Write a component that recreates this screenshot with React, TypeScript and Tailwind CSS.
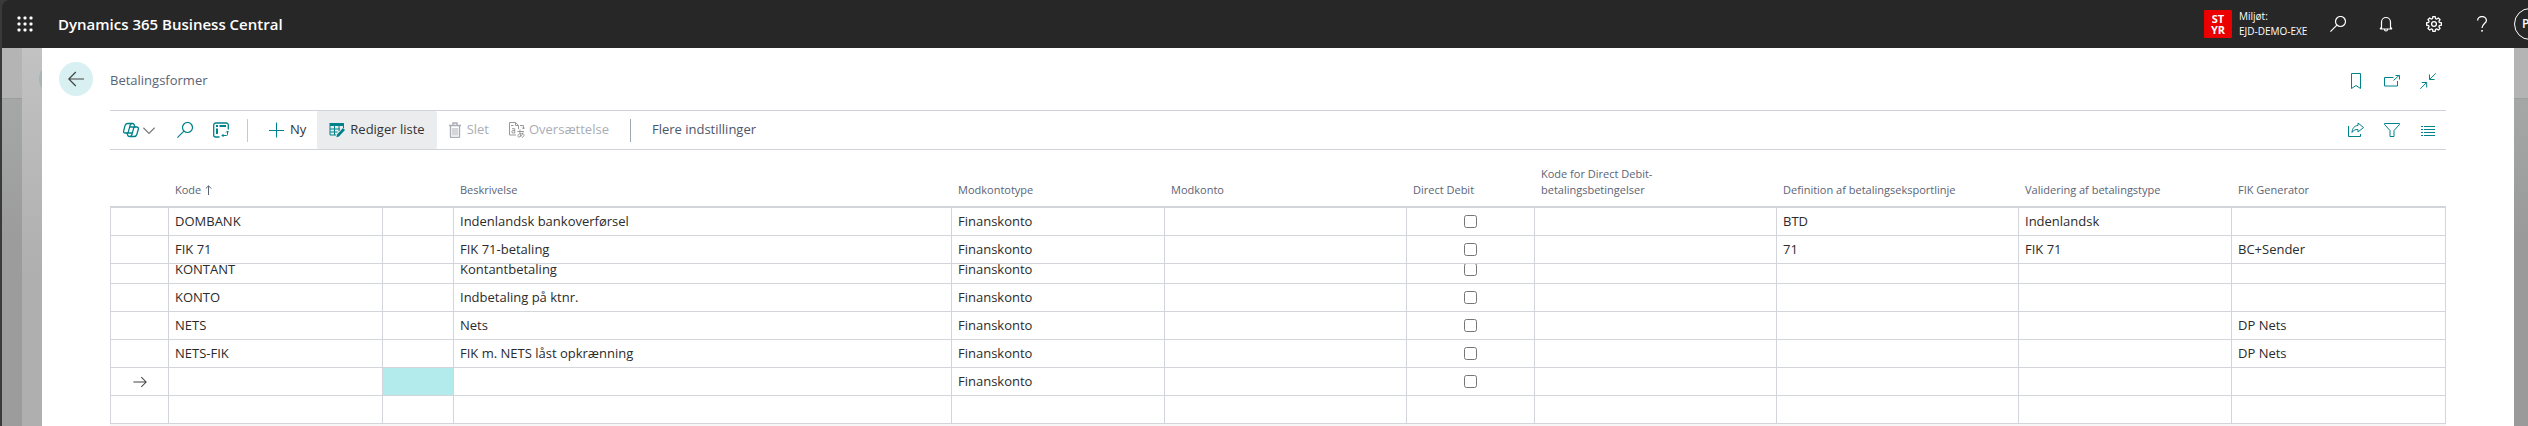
import type { ReactNode } from "react";

type Row = {
  code?: string;
  description?: string;
  accountType?: string;
  exportLine?: string;
  validation?: string;
  generator?: string;
  current?: boolean;
  clipped?: boolean;
};

const rows: Row[] = [
  { code: "DOMBANK", description: "Indenlandsk bankoverførsel", accountType: "Finanskonto", exportLine: "BTD", validation: "Indenlandsk" },
  { code: "FIK 71", description: "FIK 71-betaling", accountType: "Finanskonto", exportLine: "71", validation: "FIK 71", generator: "BC+Sender" },
  { code: "KONTANT", description: "Kontantbetaling", accountType: "Finanskonto", clipped: true },
  { code: "KONTO", description: "Indbetaling på ktnr.", accountType: "Finanskonto" },
  { code: "NETS", description: "Nets", accountType: "Finanskonto", generator: "DP Nets" },
  { code: "NETS-FIK", description: "FIK m. NETS låst opkrænning", accountType: "Finanskonto", generator: "DP Nets" },
  { accountType: "Finanskonto", current: true },
  {},
];

function Icon({ size = 16, className = "", children }: { size?: number; className?: string; children: ReactNode }) {
  return (
    <svg
      width={size}
      height={size}
      viewBox="0 0 16 16"
      fill="none"
      stroke="currentColor"
      strokeWidth="1"
      className={`shrink-0 ${className}`}
      aria-hidden="true"
    >
      {children}
    </svg>
  );
}

function SearchIcon() {
  return (
    <Icon>
      <circle cx="10.5" cy="5.5" r="5" strokeWidth="1.2" />
      <path d="M6.9 9.1 0.4 15.6" strokeWidth="1.2" />
    </Icon>
  );
}

function ArrowUp() {
  return (
    <svg width="7" height="10" viewBox="0 0 7 10" fill="none" stroke="currentColor" aria-hidden="true">
      <path d="M3.5 10V.8M.7 3.6 3.5.8l2.8 2.8" />
    </svg>
  );
}

function TopBar() {
  const button = "flex w-12 items-center justify-center";
  return (
    <header className="flex h-12 overflow-hidden rounded-tl-lg bg-[#272727] text-white">
      <button type="button" aria-label="Appstarter" className="flex w-[46px] items-center justify-center">
        <Icon>
          <g fill="currentColor" stroke="none">
            {[0, 6, 12].map((y) =>
              [0, 6, 12].map((x) => <rect key={`${x}-${y}`} x={x + 0.5} y={y + 0.5} width="3" height="3" rx="1" />),
            )}
          </g>
        </Icon>
      </button>
      <a href="#" className="flex items-center pl-[10px] text-[15px] font-semibold">
        Dynamics 365 Business Central
      </a>
      <div className="-mr-[26px] ml-auto flex">
        <div className="flex items-center gap-[7px] pr-[7px]">
          <span className="flex size-7 flex-col justify-center rounded-[1px] bg-[#eb0000] text-center text-[11px] leading-[11px] font-bold">
            <span>ST</span>
            <span>YR</span>
          </span>
          <span className="flex w-[68px] flex-col text-[10px] leading-[15px] whitespace-nowrap">
            <span>Miljøt:</span>
            <span>EJD-DEMO-EXE</span>
          </span>
        </div>
        <button type="button" aria-label="Søg" className={button}>
          <SearchIcon />
        </button>
        <button type="button" aria-label="Notifikationer" className={button}>
          <Icon>
            <path d="M2 13h12M3.5 13V6a4.5 4.5 0 0 1 9 0v7M2 13l1.5-2M14 13l-1.5-2M6.5 13.5a1.5 1.5 0 0 0 3 0" strokeWidth="1.2" />
          </Icon>
        </button>
        <button type="button" aria-label="Indstillinger" className={button}>
          <Icon>
            <path
              d="M6.9.6h2.2l.4 2 1.2.5 1.7-1.1 1.6 1.6-1.1 1.7.5 1.2 2 .4v2.2l-2 .4-.5 1.2 1.1 1.7-1.6 1.6-1.7-1.1-1.2.5-.4 2H6.9l-.4-2-1.2-.5-1.7 1.1L2 12.4l1.1-1.7-.5-1.2-2-.4V6.9l2-.4.5-1.2L2 3.6 3.6 2l1.7 1.1 1.2-.5z"
              strokeWidth="1.3"
            />
            <circle cx="8" cy="8" r="2.4" strokeWidth="1.3" />
          </Icon>
        </button>
        <button type="button" aria-label="Hjælp" className={button}>
          <Icon>
            <path d="M3.6 4.5A4.4 4 0 0 1 12.4 4.5C12.4 7.3 8 8 8 12" strokeWidth="1.3" />
            <rect x="7.2" y="14" width="1.6" height="1.6" fill="currentColor" stroke="none" />
          </Icon>
        </button>
        <button type="button" aria-label="Konto" className={button}>
          <span className="flex size-8 items-center rounded-full border border-white pl-[7px] text-[12px] font-semibold">P</span>
        </button>
      </div>
    </header>
  );
}

function PageHeader() {
  const button = "flex h-9 w-9 items-center justify-center";
  return (
    <div className="flex h-[62px] items-center pr-[68px] pl-[17px]">
      <button
        type="button"
        aria-label="Tilbage"
        className="flex size-[34px] items-center justify-center rounded-full bg-[#d9f0f2] text-[#444]"
      >
        <Icon>
          <path d="M16 8H.8M7.8 1 .8 8l7 7" strokeWidth="1.2" />
        </Icon>
      </button>
      <h1 className="pt-1 pl-[17px] text-[13px] text-[#5b6475]">Betalingsformer</h1>
      <div className="ml-auto flex pt-1 text-[#00828a]">
        <button type="button" aria-label="Bogmærke" className={button}>
          <Icon>
            <path d="M3.5.5h9v15L8 12.5l-4.5 3z" />
          </Icon>
        </button>
        <button type="button" aria-label="Åbn i nyt vindue" className={button}>
          <Icon>
            <path d="M9.5 4.5h-9v8.5h13V8M9.5 7.5l5.7-5.2M11.500 2.500h4v4" />
          </Icon>
        </button>
        <button type="button" aria-label="Skjul" className={button}>
          <Icon>
            <path d="M15.8.3 9.7 6.4M9.5 1.5v5h5M.3 15.8l6.1-6.1M1.7 9.5h5v5" />
          </Icon>
        </button>
      </div>
    </div>
  );
}

function Toolbar() {
  const icon = "flex h-full w-9 items-center justify-center";
  return (
    <div className="flex h-10 items-center border-y border-[#d0d3d9] text-[13px] text-[#333]">
      <button type="button" aria-label="Copilot" className="flex h-full items-center gap-1 pl-[13px] text-[#00828a]">
        <Icon>
          <g strokeWidth="1.3">
            <path d="M4.5 1.5h5c1 0 1.500.5 1.800 1.500l.5 2h1.900c1.500 0 2 1 1.600 2.300l-1.400 5c-.4 1.400-1.200 2.200-2.500 2.200h-5c-1 0-1.500-.5-1.800-1.500l-.5-2H2.300C.8 11 .3 10 .7 8.700l1.300-5c.4-1.400 1.200-2.200 2.500-2.200z" />
            <path d="M9 1.500c-1 0-1.600.7-1.900 1.700L5.500 9.300C5.200 10.400 4.600 11 3.600 11M7 14.500c1 0 1.600-.7 1.900-1.700l1.600-6.100c.3-1.100.9-1.700 1.900-1.700M7 5h5M4 11h5" />
          </g>
        </Icon>
        <Icon size={12} className="text-[#777]">
          <path d="M.5 5 8 12.5 15.5 5" strokeWidth="1.5" />
        </Icon>
      </button>
      <div className="flex h-full pl-3 text-[#00828a]">
        <button type="button" aria-label="Søg" className={icon}>
          <SearchIcon />
        </button>
        <button type="button" aria-label="Analysér" className={icon}>
          <Icon>
            <path d="M15.3 7.5V3A2 2 0 0 0 13.3 1H2.7A2 2 0 0 0 .7 3v10a2 2 0 0 0 2 2H6.5" strokeWidth="1.3" />
            <path d="M3 3h2v2H3zM6.5 3H13v2H6.5zM3 6.5h2V12H3z" fill="currentColor" stroke="none" />
            <path d="M14.5 9v3.5a1 1 0 0 1-1 1H9M13 10.5 14.5 9l1.5 1.5M10.5 12 9 13.5l1.5 1.5" />
          </Icon>
        </button>
      </div>
      <span className="ml-2 h-[23px] w-px bg-[#c5c9d0]" />
      <button type="button" className="flex h-full items-center gap-[5px] pr-[11px] pl-[21px]">
        <Icon className="text-[#00828a]">
          <path d="M7.5.5v15M0 8.500h15" />
        </Icon>
        Ny
      </button>
      <button type="button" className="flex h-full items-center gap-[5px] rounded-xs bg-[#ebecee] px-3">
        <Icon className="text-[#00828a]">
          <path d="M.5 1h14v3H.5z" fill="currentColor" stroke="none" />
          <path d="M1 1.5h13.5V6M1 4v9h6M5.5 4v9M10 4v5M1 7h10M1 10h7.5" />
          <path d="m14 6 2 2-6 6.5-2.7.8.7-2.8z" fill="currentColor" stroke="none" />
        </Icon>
        Rediger liste
      </button>
      <button type="button" disabled className="flex h-full items-center gap-1 px-[10px] text-[#a9adb5]">
        <Icon>
          <path d="M2 3.5h12M6 3V1h4v2M3.5 4v10.5a1 1 0 0 0 1 1h7a1 1 0 0 0 1-1V4" strokeWidth="1.4" />
          <path d="M6 6v7.5M8 6v7.5M10 6v7.5" />
        </Icon>
        Slet
      </button>
      <button type="button" disabled className="flex h-full items-center gap-1 px-[10px] text-[#a9adb5]">
        <Icon className="text-[#999]">
          <path d="M7 13H.5V.5h6l3 3V7M6.5.5v3h3M2 3.5h2.5" />
          <path d="M3 6.7h2.7v4.3H4a1.2 1.2 0 0 1 0-2.4h1.7" />
          <path d="M11 3.5h3.5V7M13 5.5 14.5 7 16 5.5M8.5 9.5H15M11 7.5c-.3 3 0 5 1 7M14 10.5c-.5 2.5-2.5 4.5-4 4.5-2 0-1.5-3.5 2.5-3.5 3 0 3.500 3 .5 4" />
        </Icon>
        Oversættelse
      </button>
      <span className="ml-[11px] h-[23px] w-px bg-[#a0a6b2]" />
      <button type="button" className="h-full px-[21px] text-[#4c566a]">
        Flere indstillinger
      </button>
      <div className="ml-auto flex h-full text-[#00828a]">
        <button type="button" aria-label="Del" className={icon}>
          <Icon>
            <path d="M.5 4v10.5h12V12M10 1l5.500 4.500L10 10V7.500c-3 0-4.700.8-6 3C4.300 6 6.500 3.700 10 3.500z" />
          </Icon>
        </button>
        <button type="button" aria-label="Filter" className={icon}>
          <Icon>
            <path d="M.5 1.5h15v1l-5.500 6v6H6v-6l-5.500-6z" />
          </Icon>
        </button>
        <button type="button" aria-label="Vis liste" className={icon}>
          <Icon>
            <path d="M4 4.5h11M4 7.5h11M4 10.5h11M4 13.5h11M1 4.5h2M1 7.5h2M1 10.5h2M1 13.5h2" />
          </Icon>
        </button>
      </div>
    </div>
  );
}

type CellProps = { clipped?: boolean; center?: boolean; highlighted?: boolean; children?: ReactNode };

function Cell({ clipped, center, highlighted, children }: CellProps) {
  return (
    <td className={`border-r border-b border-[#d2d5da] p-0 first:border-l ${highlighted ? "bg-[#b3eaec]" : ""}`}>
      <div className={`flex items-end px-[6px] ${clipped ? "h-[19px]" : "h-[27px]"} ${center ? "justify-center overflow-hidden" : ""}`}>
        <div className="flex h-[27px] shrink-0 items-center whitespace-nowrap">{children}</div>
      </div>
    </td>
  );
}

function PaymentMethods() {
  const head = "border-b-2 border-[#d2d5da] px-[6px] pt-0 pb-2 text-left align-bottom font-normal";
  return (
    <table className="w-full table-fixed border-separate border-spacing-0 text-[13px] text-[#2b2b2b]">
      <colgroup>
        <col className="w-[59px]" />
        <col className="w-[214px]" />
        <col className="w-[71px]" />
        <col />
        <col className="w-[213px]" />
        <col className="w-[242px]" />
        <col className="w-[128px]" />
        <col className="w-[242px]" />
        <col className="w-[242px]" />
        <col className="w-[213px]" />
        <col className="w-[214px]" />
      </colgroup>
      <thead className="text-[11px] leading-4 text-[#5b6475]">
        <tr className="h-[58px]">
          <th className={head} />
          <th className={head}>
            <span className="flex items-center gap-1">
              Kode <ArrowUp />
            </span>
          </th>
          <th className={head} />
          <th className={head}>Beskrivelse</th>
          <th className={head}>Modkontotype</th>
          <th className={head}>Modkonto</th>
          <th className={head}>Direct Debit</th>
          <th className={head}>
            Kode for Direct Debit-
            <br />
            betalingsbetingelser
          </th>
          <th className={head}>Definition af betalingseksportlinje</th>
          <th className={head}>Validering af betalingstype</th>
          <th className={head}>FIK Generator</th>
        </tr>
      </thead>
      <tbody>
        {rows.map((row, i) => (
          <tr key={i}>
            <Cell clipped={row.clipped} center>
              {row.current && (
                <Icon size={14} className="text-[#444]">
                  <path d="M.5 8h14.5M9.5 2.5 15 8l-5.500 5.500" strokeWidth="1.2" />
                </Icon>
              )}
            </Cell>
            <Cell clipped={row.clipped}>{row.code}</Cell>
            <Cell clipped={row.clipped} highlighted={row.current} />
            <Cell clipped={row.clipped}>{row.description}</Cell>
            <Cell clipped={row.clipped}>{row.accountType}</Cell>
            <Cell clipped={row.clipped} />
            <Cell clipped={row.clipped} center>
              {row.accountType && <input type="checkbox" aria-label={`Direct Debit ${row.code ?? ""}`} className="size-[13px]" />}
            </Cell>
            <Cell clipped={row.clipped} />
            <Cell clipped={row.clipped}>{row.exportLine}</Cell>
            <Cell clipped={row.clipped}>{row.validation}</Cell>
            <Cell clipped={row.clipped}>{row.generator}</Cell>
          </tr>
        ))}
      </tbody>
    </table>
  );
}

export default function App() {
  return (
    <div className="flex min-h-screen flex-col bg-[#3a3a3a] pl-[2px] font-['Open_Sans','Noto_Sans',sans-serif]">
      <TopBar />
      <div className="flex flex-1">
        {/* edges of the pages stacked underneath */}
        <div className="flex w-5 flex-col bg-linear-to-b from-[#a9abab] to-[#9c9c9c] to-50%">
          <div className="h-[51px] border-b border-[#9d9d9d] bg-[#b4b4b4]" />
        </div>
        <div className="relative w-5 overflow-hidden bg-linear-to-b from-[#c2c2c2] to-[#afafaf] to-60%">
          <span className="absolute top-[14px] left-[17px] size-[34px] rounded-full bg-[#a5b5b6]" />
        </div>
        <main className="flex flex-1 flex-col bg-white">
          <PageHeader />
          <div className="flex flex-1 flex-col px-[68px]">
            <Toolbar />
            <PaymentMethods />
            <div className="flex-1 bg-[#f7f7f7]" />
          </div>
        </main>
        <div className="w-[14px] bg-linear-to-b from-[#a9abab] to-[#9a9a9a] to-50%">
          <div className="h-[51px] border-b border-[#9d9d9d] bg-[#b4b4b4]" />
        </div>
      </div>
    </div>
  );
}
